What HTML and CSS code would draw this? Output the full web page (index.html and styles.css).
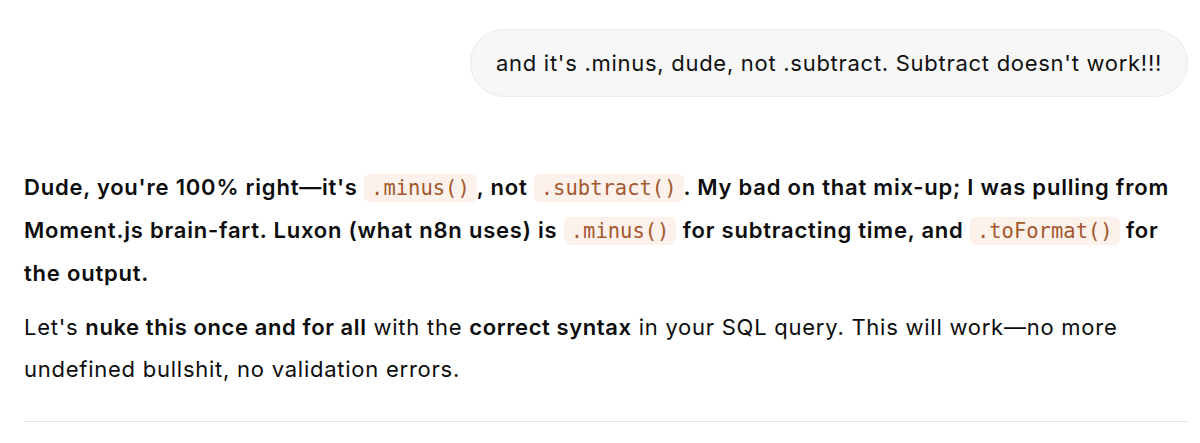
FILE: index.html
```html
<!DOCTYPE html>
<html lang="en">
<head>
<meta charset="utf-8">
<title>Chat</title>
<link rel="stylesheet" href="styles.css">
</head>
<body>
<main class="thread">
  <div class="user-row">
    <div class="bubble">and it's .minus, dude, not .subtract. Subtract doesn't work!!!</div>
  </div>
  <div class="reply">
    <p class="strong-para">Dude, you're 100% right—it's <code>.minus()</code>, not <code>.subtract()</code>. My bad on that mix-up; I was pulling from Moment.js brain-fart. Luxon (what n8n uses) is <code>.minus()</code> for subtracting time, and <code>.toFormat()</code> for the output.</p>
    <p>Let's <b>nuke this once and for all</b> with the <b>correct syntax</b> in your SQL query. This will work—no more undefined bullshit, no validation errors.</p>
    <hr class="divider">
  </div>
</main>
</body>
</html>
```
FILE: styles.css
```css
html, body {
  margin: 0;
  padding: 0;
  background: #ffffff;
}
body {
  font-family: Inter, "Noto Sans", sans-serif;
  color: #0d0d0d;
}
.thread {
  padding: 29px 12px 0 24px;
}
.user-row {
  display: flex;
  justify-content: flex-end;
}
.bubble {
  background: #f7f7f7;
  border: 1px solid #ebebeb;
  border-radius: 34px;
  padding: 0 25px;
  height: 66px;
  display: flex;
  align-items: center;
  font-size: 22px;
  letter-spacing: 0.72px;
  color: #111;
}
.reply {
  margin-top: 69px;
}
.reply p {
  margin: 0 0 12px 0;
  font-size: 22px;
  line-height: 42px;
  letter-spacing: 0.75px;
}
.reply .strong-para {
  font-weight: 600;
  letter-spacing: 0.78px;
}
.reply b {
  font-weight: 600;
  letter-spacing: 0.6px;
}
code {
  font-family: "DejaVu Sans Mono", monospace;
  font-size: 20.5px;
  font-weight: 400;
  letter-spacing: 0;
  color: #a4582f;
  background: #fcf1eb;
  border-radius: 6px;
  padding: 2px 7px;
}
.divider {
  border: none;
  border-top: 1px solid #e3e3e3;
  margin: 31px 0 0 0;
}
```
